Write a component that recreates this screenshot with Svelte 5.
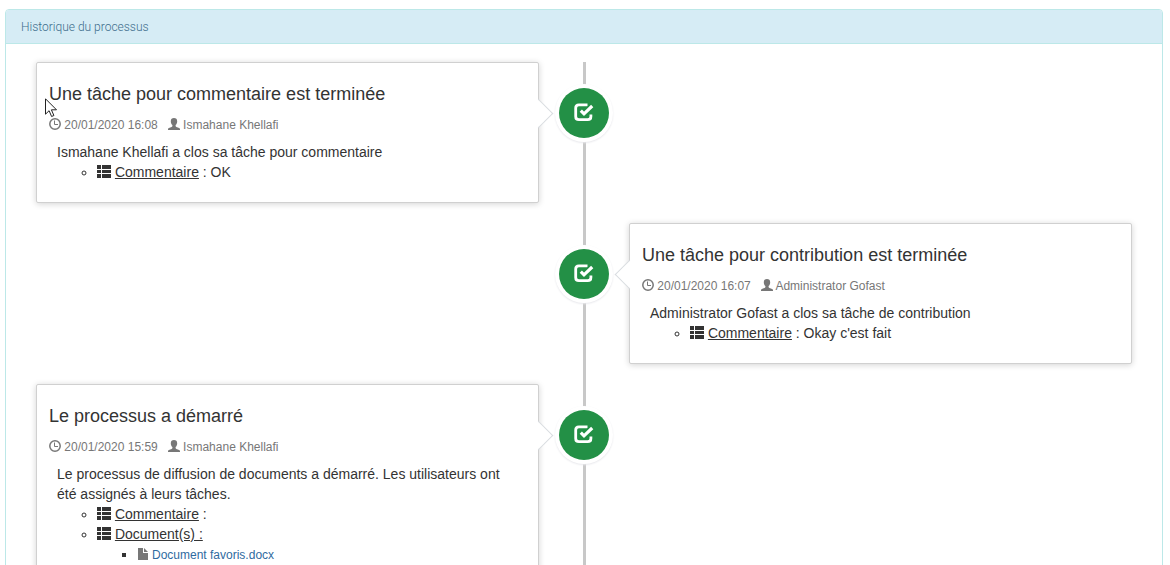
<script>
  const events = [
    {
      title: 'Une tâche pour commentaire est terminée',
      date: '20/01/2020 16:08',
      author: 'Ismahane Khellafi',
      text: 'Ismahane Khellafi a clos sa tâche pour commentaire',
      comment: 'OK',
      documents: []
    },
    {
      title: 'Une tâche pour contribution est terminée',
      date: '20/01/2020 16:07',
      author: 'Administrator Gofast',
      text: 'Administrator Gofast a clos sa tâche de contribution',
      comment: "Okay c'est fait",
      documents: []
    },
    {
      title: 'Le processus a démarré',
      date: '20/01/2020 15:59',
      author: 'Ismahane Khellafi',
      text: 'Le processus de diffusion de documents a démarré. Les utilisateurs ont été assignés à leurs tâches.',
      comment: '',
      documents: ['Document favoris.docx']
    }
  ];
</script>

{#snippet listIcon()}
  <svg class="icon list-icon" viewBox="0 0 14 14" aria-hidden="true">
    <path d="M0 0h4v4H0zM5 0h9v4H5zM0 5h4v3H0zM5 5h9v3H5zM0 9h4v4H0zM5 9h9v4H5z" />
  </svg>
{/snippet}

<section class="panel">
  <header>Historique du processus</header>
  <ul class="timeline">
    {#each events as event, i}
      <li class="event" class:right={i % 2 === 1}>
        <div class="badge">
          <svg viewBox="0 0 20 20" aria-hidden="true">
            <path d="M13.500 1.800H4.900Q1.700 1.800 1.700 5v8.400Q1.700 16.600 4.900 16.600h8.800q3.200 0 3.200-3.200V11.500" fill="none" stroke="#fff" stroke-width="2.800" />
            <path d="M6.800 7.600 10 10.800 18.200 3" fill="none" stroke="#239046" stroke-width="6" />
            <path d="M6.800 7.600 10 10.800 18.200 3" fill="none" stroke="#fff" stroke-width="3.200" />
          </svg>
        </div>
        <article class="card">
          <h4>{event.title}</h4>
          <p class="meta">
            <span>
              <svg class="icon" viewBox="0 0 12 12" aria-hidden="true">
                <circle cx="6" cy="6" r="5.200" fill="none" stroke="currentColor" stroke-width="1.500" />
                <path d="M5.500 2.500V6.500H9" fill="none" stroke="currentColor" />
              </svg>
              {event.date}
            </span>
            <span>
              <svg class="icon" viewBox="0 0 12 12" aria-hidden="true">
                <path d="M6 0C4 0 2.800 1.200 2.800 3.200c0 1.700.7 3.100 1.600 3.900v.8c0 .5-.3.800-.8 1L.9 9.900Q0 10.300 0 11.100V12h12v-.9q0-.8-.9-1.200L8.400 8.900c-.5-.2-.8-.5-.8-1v-.8c.9-.8 1.600-2.200 1.600-3.900C9.200 1.200 8 0 6 0z" />
              </svg>
              {event.author}
            </span>
          </p>
          <div class="body">
            {event.text}
            <ul class="details">
              <li>{@render listIcon()} <u>Commentaire</u> : {event.comment}</li>
              {#if event.documents.length}
                <li>
                  {@render listIcon()} <u>Document(s) :</u>
                  <ul class="documents">
                    {#each event.documents as doc}
                      <li>
                        <svg class="icon" viewBox="0 0 12 12" aria-hidden="true">
                          <path d="M1 0h5v5h5v7H1zM7 0l4 4H7z" />
                        </svg><a href="#document">{doc}</a>
                      </li>
                    {/each}
                  </ul>
                </li>
              {/if}
            </ul>
          </div>
        </article>
      </li>
    {/each}
  </ul>
</section>

<svg class="pointer" viewBox="0 0 13 20" aria-hidden="true">
  <path d="M.5.8v15.400l3.600-3.500 2.500 5.800 2.300-1-2.500-5.700h5.100z" fill="#fff" stroke="#222" />
</svg>

<style>
  :global(body) {
    background: #fff;
    color: #333;
    font: 14px/20px "Liberation Sans", Arial, sans-serif;
  }

  .panel {
    margin: 9px 7px 20px 5px;
    border: 1px solid #bce8e8;
    border-radius: 4px;
  }

  header {
    padding: 9px 15px 8px;
    border-bottom: 1px solid #bce8e8;
    border-radius: 3px 3px 0 0;
    background: #d6ecf5;
    color: #3d6d8c;
    font: 300 12px/16px Roboto, sans-serif;
  }

  .timeline {
    display: flex;
    flex-direction: column;
    gap: 20px;
    margin: 18px 30px;
    padding: 0;
    list-style: none;
    background: linear-gradient(#c8c8c8, #c8c8c8) center / 3px 100% no-repeat;
  }

  .event {
    display: grid;
    grid-template-columns: 1fr 90px 1fr;
    align-items: start;
  }

  .badge {
    grid-area: 1 / 2;
    justify-self: center;
    display: grid;
    place-items: center;
    width: 50px;
    height: 50px;
    margin-top: 26px;
    border-radius: 50%;
    background: #239046;
    box-shadow: 0 0 0 4px #fff, 0 1px 2px 4px #e8e8ec;
  }

  .badge svg {
    width: 20px;
    height: 20px;
  }

  .card {
    position: relative;
    grid-area: 1 / 1;
    padding: 21px 12px 20px;
    border: 1px solid #d0d0d0;
    border-radius: 2px;
    background: #fff;
    box-shadow: 0 1px 6px rgba(0, 0, 0, 0.175);
  }

  .right .card {
    grid-area: 1 / 3;
  }

  .card::after {
    content: "";
    position: absolute;
    top: 40px;
    right: -11px;
    width: 20px;
    height: 20px;
    border: solid #d8dce0;
    border-width: 1px 1px 0 0;
    background: linear-gradient(45deg, transparent 50%, #fff 50%);
    transform: rotate(45deg);
  }

  .right .card::after {
    right: auto;
    left: -11px;
    transform: rotate(225deg);
  }

  h4 {
    margin: 0;
    font-size: 18px;
    font-weight: 400;
    line-height: 20px;
  }

  .meta {
    display: flex;
    gap: 10px;
    margin: 11px 0 7px;
    color: #777;
    font-size: 12px;
  }

  .icon {
    width: 12px;
    height: 12px;
    fill: currentColor;
    vertical-align: -1px;
  }

  .list-icon {
    width: 14px;
    height: 14px;
    vertical-align: -2px;
  }

  .body {
    padding: 0 8px;
  }

  .details,
  .documents {
    margin: 0;
    padding-left: 40px;
  }

  .details {
    list-style: circle;
  }

  .documents {
    list-style: square;
  }

  .documents .icon {
    margin-right: 3px;
    color: #777;
  }

  .documents a {
    color: #2f6b9f;
    font-size: 12px;
    text-decoration: none;
  }

  .pointer {
    position: absolute;
    top: 98px;
    left: 45px;
    width: 13px;
    height: 20px;
  }
</style>
